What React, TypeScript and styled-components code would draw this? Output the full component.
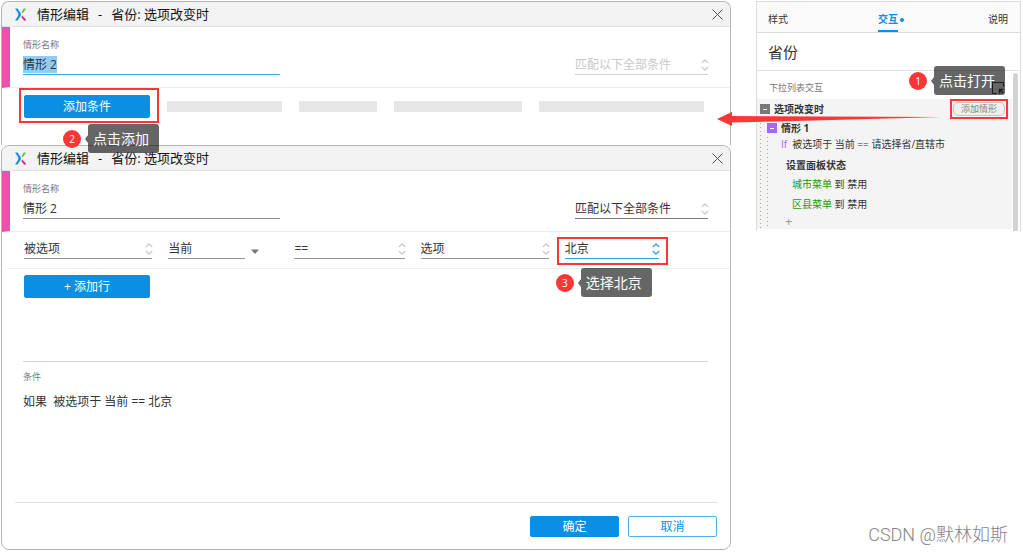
import React from "react";
import styled, { createGlobalStyle, css } from "styled-components";

const blue = "#0a8fe3";
const red = "#fb3636";
const pink = "#ea52ad";
const purple = "#a366ff";
const ink = "#333";

const GlobalStyle = createGlobalStyle`
  *, *::before, *::after { box-sizing: border-box; }
  body {
    margin: 0;
    background: #fff;
    color: ${ink};
    font-family: "Open Sans", "Noto Sans CJK SC", sans-serif;
    font-size: 12px;
    line-height: 18px;
  }
  button, input, select { font: inherit; color: inherit; margin: 0; }
`;

const Page = styled.main`
  display: grid;
  grid-template-columns: minmax(0, 1fr) 265px;
  gap: 25px;
  padding: 1px 2px 1px 1px;
`;

const Dialogs = styled.div`
  display: flex;
  flex-direction: column;
`;

const Dialog = styled.section<{ $open?: boolean }>`
  border: 1px solid #b4b4b4;
  border-radius: 8px;
  background: #fff;
  ${(p) =>
    p.$open &&
    css`
      border-bottom: 0;
      border-bottom-left-radius: 0;
      border-bottom-right-radius: 0;
    `}
`;

const TitleBar = styled.header`
  display: flex;
  align-items: center;
  height: 25px;
  padding: 0 7px 0 13px;
  border-bottom: 1px solid #e2e2e2;
  border-radius: 8px 8px 0 0;
  background: #f3f3f3;
  color: #111;
`;

const Title = styled.h2`
  display: flex;
  flex: 1;
  gap: 9px;
  margin: 0 0 0 10px;
  font-size: 13px;
  font-weight: 400;
`;

const CloseButton = styled.button`
  display: flex;
  padding: 0;
  border: 0;
  background: none;
`;

const NameSection = styled.div`
  display: flex;
  justify-content: space-between;
  align-items: flex-end;
  gap: 20px;
  padding: 12px 22px 12px 13px;
  border-left: 8px solid ${pink};
  border-bottom: 1px solid #ececec;
`;

const NameField = styled.label`
  display: flex;
  flex-direction: column;
  gap: 5px;
  flex: 0 1 257px;
`;

const Caption = styled.span`
  display: block;
  font-size: 9px;
  line-height: 12px;
  color: #777;
`;

const NameLine = styled.span<{ $active?: boolean }>`
  display: flex;
  height: 19px;
  border-bottom: 1px solid ${(p) => (p.$active ? "#35a5ea" : "#8c8c8c")};
`;

const NameInput = styled.input<{ $active?: boolean }>`
  field-sizing: content;
  height: 17px;
  padding: 0;
  border: 0;
  outline: 0;
  line-height: 17px;
  background: ${(p) => (p.$active ? "#8fcdf8" : "none")};
`;

const PickBox = styled.span<{ $tone: string; $disabled?: boolean }>`
  display: grid;
  align-items: center;
  height: 19px;
  border-bottom: 1px solid ${(p) => p.$tone};
  color: ${(p) => (p.$disabled ? "#c8c8c8" : ink)};

  select, svg { grid-area: 1 / 1; }
  svg { justify-self: end; margin-right: -1px; pointer-events: none; }
`;

const Select = styled.select`
  appearance: none;
  width: 100%;
  height: 18px;
  padding: 0;
  border: 0;
  outline: 0;
  background: none;
  line-height: 18px;
  opacity: 1;
`;

const MatchField = styled.div`
  flex: 0 1 133px;
`;

const PlaceholderRow = styled.div`
  display: grid;
  grid-template-columns: 126px 115fr 78fr 128fr 165fr;
  gap: 17px;
  align-items: center;
  padding: 7px 26px 27px 22px;
`;

const PlaceholderBar = styled.span`
  height: 11px;
  background: #e6e6e6;
`;

const ConditionRow = styled.div`
  display: grid;
  grid-template-columns: 128fr 110fr 110fr 128fr 94fr;
  gap: 16px;
  margin-left: 5px;
  padding: 8px 71px 9px 17px;
  border-bottom: 1px solid #ececec;
`;

const MenuField = styled.div`
  display: flex;
  align-items: center;
  gap: 6px;
  padding-right: 19px;

  > span { flex: 1; }
  > svg { margin-top: 4px; }
`;

const AddRowArea = styled.div`
  min-height: 93px;
  margin: 0 22px 0 21px;
  padding: 6px 0 0 1px;
  border-bottom: 1px solid #d4d4d4;
`;

const Summary = styled.div`
  display: flex;
  flex-direction: column;
  gap: 10px;
  min-height: 140px;
  padding: 9px 21px 0;

  p { margin: 0; white-space: pre; }
`;

const Footer = styled.footer`
  display: flex;
  justify-content: flex-end;
  gap: 9px;
  margin: 0 13px;
  padding: 13px 0 12px;
  border-top: 1px solid #e2e2e2;
`;

const ActionButton = styled.button<{ $outline?: boolean; $wide?: boolean }>`
  width: ${(p) => (p.$wide ? "126px" : "89px")};
  height: ${(p) => (p.$wide ? "23px" : "21px")};
  padding: 0;
  border: 1px solid ${(p) => (p.$outline ? "#4db0ef" : blue)};
  border-radius: 2px;
  background: ${(p) => (p.$outline ? "#fff" : blue)};
  color: ${(p) => (p.$outline ? blue : "#fff")};
  line-height: 18px;
`;

const Highlight = styled.div<{ $inset: string }>`
  position: relative;

  &::after {
    content: "";
    position: absolute;
    inset: ${(p) => p.$inset};
    border: 2px solid ${red};
    pointer-events: none;
  }
`;

const CalloutBox = styled.div<{ $place: "above" | "below" | "belowStart" }>`
  position: absolute;
  z-index: 2;
  display: flex;
  align-items: center;
  width: 96px;
  ${(p) => p.$place === "above" && "right: 0; bottom: calc(100% + 7px);"}
  ${(p) => p.$place === "below" && "right: -9px; top: calc(100% + 6px);"}
  ${(p) => p.$place === "belowStart" && "left: -9px; top: calc(100% + 9px);"}
`;

const Badge = styled.span`
  width: 18px;
  height: 18px;
  border-radius: 50%;
  background: ${red};
  color: #fff;
  font-size: 10px;
  line-height: 18px;
  text-align: center;
`;

const Pointer = styled.span`
  margin-left: 4px;
  border: solid transparent;
  border-width: 4px 3px 4px 0;
  border-right-color: rgba(0, 0, 0, 0.6);
`;

const Tip = styled.span`
  flex: 1;
  height: 29px;
  padding-left: 5px;
  border-radius: 3px;
  background: rgba(0, 0, 0, 0.6);
  color: #fff;
  font-size: 14px;
  line-height: 29px;
  white-space: nowrap;
`;

const Side = styled.div`
  position: relative;
  display: flex;
  flex-direction: column;
  justify-content: space-between;
`;

const Panel = styled.aside`
  border: 1px solid #dcdcdc;
  border-bottom: 0;
  font-size: 10px;
`;

const Tabs = styled.nav`
  display: flex;
  justify-content: space-between;
  height: 31px;
  padding: 0 12px 0 11px;
  border-bottom: 1px solid #dcdcdc;
  background: #fafafa;
`;

const Tab = styled.button<{ $active?: boolean }>`
  position: relative;
  padding: 5px 0 0;
  border: 0;
  border-bottom: 2px solid ${(p) => (p.$active ? blue : "transparent")};
  background: none;
  line-height: 20px;
  ${(p) =>
    p.$active &&
    css`
      color: ${blue};
      font-weight: 700;

      &::after {
        content: "";
        position: absolute;
        left: calc(100% + 2px);
        top: 16px;
        width: 4px;
        height: 4px;
        border-radius: 50%;
        background: ${blue};
      }
    `}
`;

const WidgetName = styled.h1`
  margin: 0;
  padding: 8px 11px 7px;
  border-bottom: 1px solid #e2e2e2;
  font-size: 15px;
  font-weight: 400;
  line-height: 22px;
`;

const Scroller = styled.div`
  display: flex;
`;

const ScrollContent = styled.div`
  flex: 1;
  padding-bottom: 2px;
`;

const ScrollBar = styled.div`
  width: 5px;
  margin: 2px 2px 0 1px;
  border-radius: 3px 3px 0 0;
  background: #d2d2d2;
`;

const ListHeading = styled.div`
  display: flex;
  justify-content: space-between;
  align-items: center;
  height: 28px;
  padding: 6px 8px 0 12px;
`;

const Tree = styled.div`
  background: #f4f4f4;
`;

const EventRow = styled.div`
  display: flex;
  align-items: center;
  gap: 4px;
  height: 20px;
  padding: 0 7px 0 3px;

  strong { flex: 1; }
`;

const Toggle = styled.button<{ $color: string }>`
  display: flex;
  align-items: center;
  justify-content: center;
  width: 10px;
  height: 10px;
  padding: 0;
  border: 0;
  background: ${(p) => p.$color};

  &::before {
    content: "";
    width: 4px;
    height: 1px;
    background: #fff;
  }
`;

const AddCaseButton = styled.button`
  display: block;
  width: 52px;
  height: 14px;
  padding: 0;
  border: 1px solid #c4c4c4;
  border-radius: 5px;
  background: #efefef;
  color: #888;
  font-size: 9px;
  line-height: 12px;
`;

const dots = (color: string) =>
  `repeating-linear-gradient(${color} 0 1px, transparent 1px 4px) left top / 1px 100% no-repeat`;

const Branch = styled.div<{ $color: string }>`
  margin-left: 3px;
  padding-left: 7px;
  background: ${(p) => dots(p.$color)};
`;

const CaseRow = styled.div`
  display: flex;
  align-items: center;
  gap: 4px;
  height: 18px;
`;

const CaseBody = styled.div`
  padding-left: 14px;
  background: ${dots("#b88aff")};
`;

const IfRow = styled.div`
  display: flex;
  gap: 5px;
  line-height: 14px;

  em { font-style: normal; color: ${purple}; }
`;

const ActionTitle = styled.strong`
  display: block;
  padding: 5px 0 0 5px;
`;

const Target = styled.div`
  padding-left: 11px;
  line-height: 20px;

  a { color: #1a9b0e; text-decoration: none; }
`;

const AddTarget = styled.button`
  display: block;
  height: 15px;
  margin-left: 4px;
  padding: 0;
  border: 0;
  background: none;
  color: #999;
  font-size: 13px;
  line-height: 15px;
`;

const Arrow = styled.svg`
  position: absolute;
  z-index: 1;
  left: -39px;
  top: 110px;
  pointer-events: none;
`;

const Watermark = styled.div`
  padding: 0 13px 3px 0;
  color: #858585;
  font-family: Roboto, "Noto Sans CJK SC", sans-serif;
  font-size: 18px;
  font-weight: 300;
  line-height: 24px;
  text-align: right;
`;

const Logo = () => (
  <svg width="12" height="13" viewBox="0 0 12 13" fill="none" aria-hidden="true">
    <path d="M0 .5h2.6C4 3 6 4.600 6 6.500S4 10 2.600 12.500H0C2 9.500 3.300 8 3.300 6.500S2 3.500 0 .5z" fill="#1592dc" />
    <path d="M8.700.5h2.400C10 2.500 9 3.500 7.700 5.200L6.500 4z" fill="#74bf44" />
    <path d="M7.500 7.700C9 9.300 10.200 10.500 11.400 12.500H9L6.400 9z" fill="#e5168a" />
  </svg>
);

const CloseIcon = () => (
  <svg width="11" height="11" viewBox="0 0 11 11" fill="none" stroke="#555" aria-hidden="true">
    <path d="M.5.5l10 10M10.500.5l-10 10" />
  </svg>
);

const Chevrons = ({ color = "#cccccc" }: { color?: string }) => (
  <svg width="8" height="12" viewBox="0 0 8 12" fill="none" stroke={color} strokeWidth="1.300" aria-hidden="true">
    <path d="M.8 4L4 1l3.200 3M.8 8L4 11l3.200-3" />
  </svg>
);

const Triangle = () => (
  <svg width="8" height="5" viewBox="0 0 8 5" aria-hidden="true">
    <path d="M0 .5h8L4 5z" fill="#777" />
  </svg>
);

const PickTargetIcon = () => (
  <svg width="12" height="13" viewBox="0 0 12 13" fill="none" stroke="#444" aria-hidden="true">
    <path d="M4.500 11.500h-4V.5h11v4" />
    <path d="M7.500 11.500v-4h4M8 8l3.500 3.500" strokeWidth="1.500" />
  </svg>
);

interface PickProps {
  label: string;
  value: string;
  tone?: string;
  disabled?: boolean;
  chevron?: string | null;
}

const Pick = ({ label, value, tone = "#969696", disabled, chevron }: PickProps) => (
  <PickBox $tone={tone} $disabled={disabled}>
    <Select aria-label={label} disabled={disabled} defaultValue={value}>
      <option>{value}</option>
    </Select>
    {chevron !== null && <Chevrons color={chevron} />}
  </PickBox>
);

const Callout = ({ step, text, place }: { step: number; text: string; place: "above" | "below" | "belowStart" }) => (
  <CalloutBox $place={place}>
    <Badge>{step}</Badge>
    <Pointer />
    <Tip>{text}</Tip>
  </CalloutBox>
);

const DialogHead = ({ active }: { active?: boolean }) => (
  <>
    <TitleBar>
      <Logo />
      <Title>
        <span>情形编辑</span>
        <span>-</span>
        <span>省份: 选项改变时</span>
      </Title>
      <CloseButton type="button" aria-label="关闭">
        <CloseIcon />
      </CloseButton>
    </TitleBar>
    <NameSection>
      <NameField>
        <Caption>情形名称</Caption>
        <NameLine $active={active}>
          <NameInput $active={active} type="text" defaultValue="情形 2" />
        </NameLine>
      </NameField>
      <MatchField>
        <Pick
          label="匹配方式"
          value="匹配以下全部条件"
          tone={active ? "#cfcfcf" : "#7a7a7a"}
          disabled={active}
        />
      </MatchField>
    </NameSection>
  </>
);

export default function App() {
  return (
    <>
      <GlobalStyle />
      <Page>
        <Dialogs>
          <Dialog $open>
            <DialogHead active />
            <PlaceholderRow>
              <Highlight $inset="-7px -9px -5px -5px">
                <ActionButton type="button" $wide>添加条件</ActionButton>
                <Callout step={2} text="点击添加" place="below" />
              </Highlight>
              <PlaceholderBar />
              <PlaceholderBar />
              <PlaceholderBar />
              <PlaceholderBar />
            </PlaceholderRow>
          </Dialog>

          <Dialog>
            <DialogHead />
            <ConditionRow>
              <Pick label="条件类型" value="被选项" />
              <MenuField>
                <Pick label="元件" value="当前" chevron={null} />
                <Triangle />
              </MenuField>
              <Pick label="运算符" value="==" />
              <Pick label="比较类型" value="选项" />
              <Highlight $inset="-3px -9px -6px -8px">
                <Pick label="选项值" value="北京" tone="#35a5ea" chevron="#35a5ea" />
                <Callout step={3} text="选择北京" place="belowStart" />
              </Highlight>
            </ConditionRow>
            <AddRowArea>
              <ActionButton type="button" $wide>+ 添加行</ActionButton>
            </AddRowArea>
            <Summary>
              <Caption>条件</Caption>
              <p>{"如果  被选项于 当前 == 北京"}</p>
            </Summary>
            <Footer>
              <ActionButton type="button">确定</ActionButton>
              <ActionButton type="button" $outline>取消</ActionButton>
            </Footer>
          </Dialog>
        </Dialogs>

        <Side>
          <Panel>
            <Tabs>
              <Tab type="button">样式</Tab>
              <Tab type="button" $active>交互</Tab>
              <Tab type="button">说明</Tab>
            </Tabs>
            <WidgetName>省份</WidgetName>
            <Scroller>
              <ScrollContent>
                <ListHeading>
                  <Caption>下拉列表交互</Caption>
                  <PickTargetIcon />
                </ListHeading>
                <Tree>
                  <EventRow>
                    <Toggle type="button" $color="#777" aria-label="折叠事件" />
                    <strong>选项改变时</strong>
                    <Highlight $inset="-3px">
                      <AddCaseButton type="button">添加情形</AddCaseButton>
                      <Callout step={1} text="点击打开" place="above" />
                    </Highlight>
                  </EventRow>
                  <Branch $color="#aaa">
                    <CaseRow>
                      <Toggle type="button" $color={purple} aria-label="折叠情形" />
                      <strong>情形 1</strong>
                    </CaseRow>
                    <CaseBody>
                      <IfRow>
                        <em>If</em>
                        <span>被选项于 当前 == 请选择省/直辖市</span>
                      </IfRow>
                      <ActionTitle>设置面板状态</ActionTitle>
                      <Target><a href="#city">城市菜单</a> 到 禁用</Target>
                      <Target><a href="#county">区县菜单</a> 到 禁用</Target>
                      <AddTarget type="button" aria-label="添加目标">+</AddTarget>
                    </CaseBody>
                  </Branch>
                </Tree>
              </ScrollContent>
              <ScrollBar />
            </Scroller>
          </Panel>
          <Arrow width="226" height="16" viewBox="0 0 226 16" aria-hidden="true">
            <path d="M0 8L15 1v4L225 6 60 10.500 15 11.500V15z" fill={red} />
          </Arrow>
          <Watermark>CSDN @默林如斯</Watermark>
        </Side>
      </Page>
    </>
  );
}
